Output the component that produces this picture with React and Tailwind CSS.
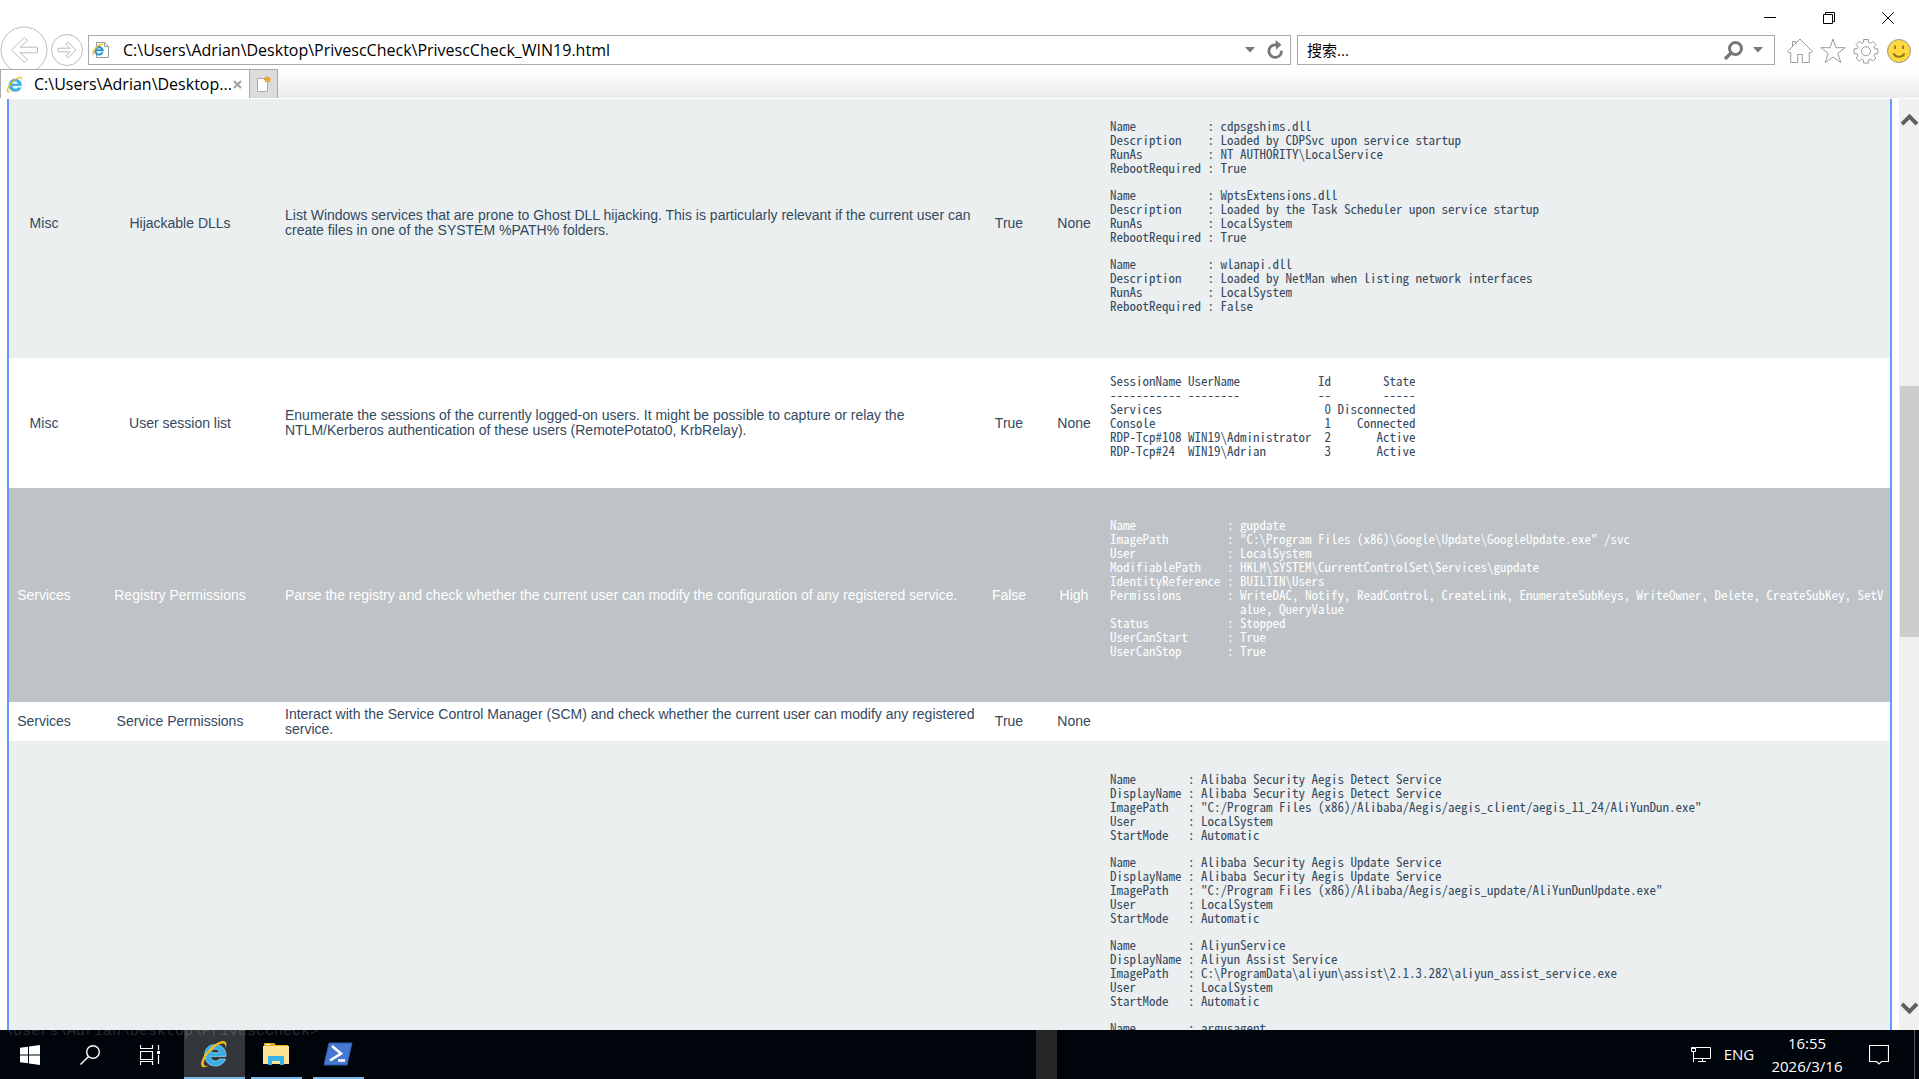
import React from "react";

const findings = [
  {
    category: "Misc",
    name: "Hijackable DLLs",
    description:
      "List Windows services that are prone to Ghost DLL hijacking. This is particularly relevant if the current user can create files in one of the SYSTEM %PATH% folders.",
    compliance: "True",
    severity: "None",
    rowClass: "h-[270px] bg-[#ebeff0]",
    resultClass: "pt-[31px]",
    records: [
      `Name           : cdpsgshims.dll
Description    : Loaded by CDPSvc upon service startup
RunAs          : NT AUTHORITY\\LocalService
RebootRequired : True`,
      `Name           : WptsExtensions.dll
Description    : Loaded by the Task Scheduler upon service startup
RunAs          : LocalSystem
RebootRequired : True`,
      `Name           : wlanapi.dll
Description    : Loaded by NetMan when listing network interfaces
RunAs          : LocalSystem
RebootRequired : False`,
    ],
  },
  {
    category: "Misc",
    name: "User session list",
    description:
      "Enumerate the sessions of the currently logged-on users. It might be possible to capture or relay the NTLM/Kerberos authentication of these users (RemotePotato0, KrbRelay).",
    compliance: "True",
    severity: "None",
    rowClass: "h-[130px] bg-white",
    resultClass: "pt-4",
    records: [
      `SessionName UserName            Id        State
----------- --------            --        -----
Services                         0 Disconnected
Console                          1    Connected
RDP-Tcp#108 WIN19\\Administrator  2       Active
RDP-Tcp#24  WIN19\\Adrian         3       Active`,
    ],
  },
  {
    category: "Services",
    name: "Registry Permissions",
    description:
      "Parse the registry and check whether the current user can modify the configuration of any registered service.",
    compliance: "False",
    severity: "High",
    rowClass: "h-[214px] bg-[#bdc3c7] text-white",
    resultClass: "pt-[30px]",
    records: [
      `Name              : gupdate
ImagePath         : "C:\\Program Files (x86)\\Google\\Update\\GoogleUpdate.exe" /svc
User              : LocalSystem
ModifiablePath    : HKLM\\SYSTEM\\CurrentControlSet\\Services\\gupdate
IdentityReference : BUILTIN\\Users
Permissions       : WriteDAC, Notify, ReadControl, CreateLink, EnumerateSubKeys, WriteOwner, Delete, CreateSubKey, SetV
                    alue, QueryValue
Status            : Stopped
UserCanStart      : True
UserCanStop       : True`,
    ],
  },
  {
    category: "Services",
    name: "Service Permissions",
    description:
      "Interact with the Service Control Manager (SCM) and check whether the current user can modify any registered service.",
    compliance: "True",
    severity: "None",
    rowClass: "h-[39px] bg-white",
    resultClass: "",
    records: [],
  },
  {
    category: "",
    name: "",
    description: "",
    compliance: "",
    severity: "",
    rowClass: "bg-[#ebeff0]",
    resultClass: "pt-[31px]",
    records: [
      `Name        : Alibaba Security Aegis Detect Service
DisplayName : Alibaba Security Aegis Detect Service
ImagePath   : "C:/Program Files (x86)/Alibaba/Aegis/aegis_client/aegis_11_24/AliYunDun.exe"
User        : LocalSystem
StartMode   : Automatic`,
      `Name        : Alibaba Security Aegis Update Service
DisplayName : Alibaba Security Aegis Update Service
ImagePath   : "C:/Program Files (x86)/Alibaba/Aegis/aegis_update/AliYunDunUpdate.exe"
User        : LocalSystem
StartMode   : Automatic`,
      `Name        : AliyunService
DisplayName : Aliyun Assist Service
ImagePath   : C:\\ProgramData\\aliyun\\assist\\2.1.3.282\\aliyun_assist_service.exe
User        : LocalSystem
StartMode   : Automatic`,
      `Name        : argusagent`,
    ],
  },
];

const IeLogo = ({ className }) => (
  <svg viewBox="0 0 28 28" className={className} aria-hidden="true">
    <path
      d="M15 4.5C9 4.5 4.6 9 4.6 15.2 4.6 21.500 9 26 15.300 26c4.700 0 8.600-2.500 10.200-7h-6.300c-.8 1.300-2.100 2-3.800 2-2.700 0-4.600-1.700-4.700-4.400h15.200c.6-7.200-3.900-12.100-10.900-12.100zm-4.200 8.200c.5-2.200 2.100-3.500 4.400-3.500s3.900 1.300 4.200 3.500z"
      fill="#3aaee6"
      stroke="#9be0fa"
      strokeWidth=".7"
    />
    <path
      d="M25.500 8.500c1.400-3.500 1.400-6.200-.6-7.100C21.500-.1 13.500 4.300 7.500 11.200 1.800 17.800-.3 24.700 2.200 26.700c1.500 1.100 4.100.3 7-1.500-2.500.9-4.200.9-4.900 0C2.700 23 5 17.400 9.900 11.800 15 6.100 21.200 2.500 24 3.700c1.300.6 1.700 2.300 1.500 4.800z"
      fill="#f6bf16"
    />
  </svg>
);

const PageIcon = () => (
  <svg viewBox="0 0 18 18" className="size-[18px] shrink-0" aria-hidden="true">
    <path d="M4.500 1.500h8l4 4v11h-12z" fill="#fff" stroke="#999" />
    <path d="M12.500 1.500v4h4" fill="none" stroke="#999" />
    <path d="M10.500 11.200a3.700 3.700 0 1 1 .2-2H5" fill="none" stroke="#2095d8" strokeWidth="2" />
    <path d="M1.500 14C-.5 11 6 2.500 11 3.500" fill="none" stroke="#f1bb1b" strokeWidth="1.400" />
  </svg>
);

const TitleBar = () => (
  <div className="flex h-[35px] items-start justify-end gap-[47px] pr-[25px] pt-3">
    <button aria-label="Minimize" className="size-3">
      <svg viewBox="0 0 12 12" className="size-3" stroke="#000" fill="none">
        <path d="M0 5.500h12" />
      </svg>
    </button>
    <button aria-label="Restore" className="size-3">
      <svg viewBox="0 0 12 12" className="size-3" stroke="#000" fill="none">
        <path d="M.5 2.500h9v9h-9zM2.500 2.500v-2h9v9h-2" />
      </svg>
    </button>
    <button aria-label="Close" className="size-3">
      <svg viewBox="0 0 12 12" className="size-3" stroke="#000" fill="none">
        <path d="M.3.3l11.400 11.400M11.700.3L.3 11.700" />
      </svg>
    </button>
  </div>
);

const AddressBar = () => (
  <div className="flex h-[34px] items-start">
    <div className="-mt-2 flex h-[46px] w-[88px] shrink-0 items-center">
      <button aria-label="Back" className="size-12 shrink-0">
        <svg viewBox="0 0 48 48" className="size-12" fill="none" stroke="#bcbcbc">
          <circle cx="24" cy="24" r="23" />
          <path d="M11.500 24L24.500 11.500l3 3-7.500 6.700h17.500v5.600H20l7.500 6.700-3 3z" />
        </svg>
      </button>
      <button aria-label="Forward" className="ml-[3px] size-8 shrink-0">
        <svg viewBox="0 0 32 32" className="size-8" fill="none" stroke="#bcbcbc">
          <circle cx="16" cy="16" r="15.500" />
          <path d="M25 16l-8-8-2 2 4 4.200H7v3.600h12L15 22l2 2z" />
        </svg>
      </button>
    </div>
    <div className="flex h-[30px] flex-1 items-center border border-[#aaaaaa] bg-white pl-[3px]">
      <PageIcon />
      <input
        aria-label="Address"
        defaultValue="C:\Users\Adrian\Desktop\PrivescCheck\PrivescCheck_WIN19.html"
        className="ml-[13px] h-7 min-w-0 flex-1 text-[16px] text-black outline-none"
      />
      <button aria-label="Show address history" className="mr-3">
        <svg viewBox="0 0 10 6" className="h-[6px] w-[10px]" fill="#777">
          <path d="M0 0h10L5 5.500z" />
        </svg>
      </button>
      <button aria-label="Refresh" className="mr-[7px]">
        <svg viewBox="0 0 16 20" className="h-5 w-4">
          <path d="M9 4.800H8a6.300 6.300 0 1 0 6.500 6" fill="none" stroke="#777" strokeWidth="2.800" />
          <path d="M8.500 0l6 4.700-5.500 5z" fill="#777" />
        </svg>
      </button>
    </div>
    <div className="ml-[6px] flex h-[30px] w-[478px] items-center border border-[#aaaaaa] bg-white pl-[9px]">
      <input
        aria-label="Search"
        placeholder="搜索..."
        className="h-7 min-w-0 flex-1 text-[15px] text-black outline-none placeholder:text-black"
      />
      <button aria-label="Go" className="mr-[10px]">
        <svg viewBox="0 0 19 19" className="size-[19px]" fill="none" stroke="#777">
          <circle cx="11.500" cy="7.500" r="6" strokeWidth="3" />
          <path d="M7 12l-6 6" strokeWidth="3.400" />
        </svg>
      </button>
      <button aria-label="Search options" className="mr-[11px]">
        <svg viewBox="0 0 10 6" className="h-[6px] w-[10px]" fill="#777">
          <path d="M0 0h10L5 5.500z" />
        </svg>
      </button>
    </div>
    <div className="mr-[7px] flex h-[30px] items-center gap-[7px] pl-3 pt-[2px]">
      <button aria-label="Home" className="size-[26px]">
        <svg viewBox="0 0 26 26" className="size-[26px]" fill="none" stroke="#9b9b9b">
          <path d="M.7 13.500L13 1l12.300 12.500-1 1h-2v10h-7v-8h-4.600v8h-7v-10h-2zM5.500 8V3.500h3.200v1.700" />
        </svg>
      </button>
      <button aria-label="Favorites" className="size-[26px]">
        <svg viewBox="0 0 26 26" className="size-[26px]" fill="none" stroke="#9b9b9b">
          <path d="M13 1l3 8.700h9.200l-7.400 5.600 3 9.200L13 19l-7.800 5.500 3-9.200L.8 9.700H10z" />
        </svg>
      </button>
      <button aria-label="Tools" className="size-[26px]">
        <svg viewBox="0 0 26 26" className="size-[26px]" fill="none" stroke="#9b9b9b">
          <path d="M10.600 1.500h4.800v3l2.200.9 2.200-2.100 3.200 3.300-2 2.200.9 2h3v4.900h-3l-.9 2.200 2 2.100-3.200 3.200-2.200-2-2.200.9v3h-4.800v-3l-2.200-.9-2.200 2L3 20l2-2.100-.9-2.200h-3v-4.900h3l.9-2-2-2.200 3.200-3.300 2.200 2.100 2.200-.9z" />
          <circle cx="13" cy="13.200" r="4.500" />
        </svg>
      </button>
      <button aria-label="Send a smile" className="size-[26px]">
        <svg viewBox="0 0 26 26" className="size-[26px]">
          <circle cx="13" cy="13" r="11.500" fill="#ffd83d" stroke="#999" />
          <path d="M9 7.500v3.500M17 7.500v3.500" stroke="#8f7514" strokeWidth="1.800" />
          <path d="M7.500 15.500c2.500 4.500 8.500 4.500 11 0" fill="none" stroke="#8f7514" strokeWidth="1.800" />
        </svg>
      </button>
    </div>
  </div>
);

const TabStrip = () => (
  <div className="relative mb-px flex h-[29px] bg-gradient-to-b from-white to-[#ebebeb]">
    <div className="flex w-[250px] items-center border border-b-0 border-[#aaaaaa] bg-white pl-[5px]">
      <IeLogo className="size-[17px] shrink-0" />
      <button className="ml-[11px] flex-1 whitespace-nowrap text-left text-[16px] text-black">
        C:\Users\Adrian\Desktop...
      </button>
      <button aria-label="Close tab" className="mr-[7px]">
        <svg viewBox="0 0 9 9" className="size-[9px]" stroke="#a0a0a0" strokeWidth="2">
          <path d="M1 1l7 7M8 1L1 8" />
        </svg>
      </button>
    </div>
    <button
      aria-label="New tab"
      className="flex w-7 items-center justify-center border border-b-0 border-l-0 border-[#aaaaaa] bg-[#dcdcdc]"
    >
      <svg viewBox="0 0 14 16" className="h-4 w-[14px]">
        <path d="M.5 2.500h10v13H.5z" fill="#fff" stroke="#aaa" />
        <path d="M10.500 0v7M7 3.500h7M8 1l5 5M13 1L8 6" stroke="#f0a329" strokeWidth="1.300" />
      </svg>
    </button>
  </div>
);

const FindingRow = ({ finding }) => (
  <tr className={finding.rowClass}>
    <td className="px-1 text-center">{finding.category}</td>
    <td className="px-1 text-center">{finding.name}</td>
    <td className="pl-1">{finding.description}</td>
    <td className="px-1 text-center">{finding.compliance}</td>
    <td className="px-1 text-center">{finding.severity}</td>
    <td className={`px-0.5 align-top ${finding.resultClass}`}>
      <div className="flex flex-col gap-[13px]">
        {finding.records.map((record, i) => (
          <pre
            key={i}
            className="font-['Noto_Sans_Mono_CJK_SC','Liberation_Mono',monospace] text-[13px] leading-[14px]"
          >
            {record}
          </pre>
        ))}
      </div>
    </td>
  </tr>
);

const ReportTable = () => (
  <div className="min-w-0 flex-1 overflow-hidden px-[7px]">
    <table className="-mt-[11px] w-full table-fixed border-collapse border-x-2 border-[#6699ff] font-['Liberation_Sans',Arial,sans-serif] text-[14px] leading-[15px] text-[#34495e]">
      <colgroup>
        <col className="w-[71px]" />
        <col className="w-[202px]" />
        <col className="w-[697px]" />
        <col className="w-[62px]" />
        <col className="w-[68px]" />
        <col />
      </colgroup>
      <tbody>
        {findings.map((finding, i) => (
          <FindingRow key={i} finding={finding} />
        ))}
      </tbody>
    </table>
  </div>
);

const ScrollBar = () => (
  <div className="flex w-5 shrink-0 flex-col items-center bg-[#f0f0f0] pb-[15px] pt-[14px]">
    <svg viewBox="0 0 17 13" className="h-[13px] w-[17px]" fill="none" stroke="#606060" strokeWidth="4">
      <path d="M1 11l7.500-7.500L16 11" />
    </svg>
    <div className="flex w-full flex-1 flex-col">
      <div className="flex-[260]" />
      <div className="ml-px flex-[251] bg-[#cdcdcd]" />
      <div className="flex-[365]" />
    </div>
    <svg viewBox="0 0 17 13" className="h-[13px] w-[17px]" fill="none" stroke="#606060" strokeWidth="4">
      <path d="M1 2l7.500 7.500L16 2" />
    </svg>
  </div>
);

const Taskbar = () => (
  <footer className="relative flex h-[49px] shrink-0 justify-between overflow-hidden bg-[#00040b] text-white">
    <span className="absolute -top-[6px] left-1 font-['Liberation_Mono',monospace] text-[15px] leading-4 text-[#2a2b2b]">
      \Users\Adrian\Desktop\PrivescCheck&gt;
    </span>
    <div className="absolute inset-y-0 left-[54%] w-[21px] bg-[#262626]" />
    <div className="relative flex">
      <button aria-label="Start" className="flex w-[60px] items-center justify-center">
        <svg viewBox="0 0 20 20" className="size-5" fill="#fff">
          <path d="M0 2.800l8-1.100v7.800H0zM9 1.500L20 0v9.500H9zM0 10.500h8v7.800l-8-1.100zM9 10.500h11V20L9 18.500z" />
        </svg>
      </button>
      <button aria-label="Search" className="flex w-[60px] items-center justify-center">
        <svg viewBox="0 0 20 20" className="size-5" fill="none" stroke="#fff" strokeWidth="1.400">
          <circle cx="13" cy="7" r="6.300" />
          <path d="M8.500 11.500L.5 19.500" />
        </svg>
      </button>
      <button aria-label="Task View" className="mr-1 flex w-[60px] items-center justify-center">
        <svg viewBox="0 0 20 20" className="size-5" fill="none" stroke="#fff">
          <path d="M.5 0v3.500h12V0M.5 6.500h12v8H.5zM.5 20v-3.500h12V20M18.500 0v5M18.500 10v9" strokeWidth="1.200" />
          <path d="M17 6h3v3h-3z" fill="#fff" stroke="none" />
        </svg>
      </button>
      <button
        aria-label="Internet Explorer"
        className="flex w-[61px] items-center justify-center border-b-2 border-[#76b9ed] bg-white/20 pr-[2px]"
      >
        <IeLogo className="size-7" />
      </button>
      <button
        aria-label="File Explorer"
        className="ml-[6px] flex w-[51px] items-center justify-center border-b-2 border-[#76b9ed] pr-[2px]"
      >
        <svg viewBox="0 0 26 24" className="h-6 w-[26px]">
          <path d="M1 1h10l2 2h12v6H1z" fill="#e8a917" />
          <path d="M3 2h4v1H3z" fill="#fff" />
          <path d="M0 4h26v18H0z" fill="#ffe394" />
          <path d="M5 23V14h16v9h-4v-4H9v4z" fill="#38b2e6" />
        </svg>
      </button>
      <button
        aria-label="Windows PowerShell"
        className="ml-[11px] flex w-[51px] items-center justify-center border-b-2 border-[#76b9ed] pr-[2px]"
      >
        <svg viewBox="0 0 30 24" className="h-6 w-[30px]">
          <path d="M6 1h23l-5 22H1z" fill="#4478d2" stroke="#305da8" />
          <path d="M9 4l9 7.500-11 7M15 18.500h7" fill="none" stroke="#fff" strokeWidth="2.500" />
        </svg>
      </button>
    </div>
    <div className="relative flex items-center text-[15px]">
      <svg viewBox="0 0 20 17" className="h-[17px] w-5" fill="none" stroke="#fff" aria-hidden="true">
        <path d="M5 1.500h14.500v11H3M11.500 12.500v3M7 15.500h8M.5 1.500h4v4h-4zM2.500 5.500V16M0 2.500h5" />
      </svg>
      <button className="ml-3 w-8">ENG</button>
      <button className="ml-3 w-20 text-center leading-[23px]">
        16:55
        <br />
        2026/3/16
      </button>
      <button aria-label="Action Center" className="ml-[22px]">
        <svg viewBox="0 0 20 20" className="size-5" fill="none" stroke="#fff">
          <path d="M.5.5h19v16h-7L10 19l-2.500-2.500h-7z" strokeWidth="1.200" />
        </svg>
      </button>
      <div className="ml-[25px] h-full w-[5px] border-l border-[#5a5c60]" />
    </div>
  </footer>
);

const App = () => {
  return (
    <div className="flex h-screen flex-col overflow-hidden bg-white font-['Open_Sans','Noto_Sans_CJK_SC',sans-serif]">
      <header className="shrink-0">
        <TitleBar />
        <AddressBar />
        <TabStrip />
      </header>
      <main className="flex min-h-0 flex-1">
        <ReportTable />
        <ScrollBar />
      </main>
      <Taskbar />
    </div>
  );
};

export default App;
